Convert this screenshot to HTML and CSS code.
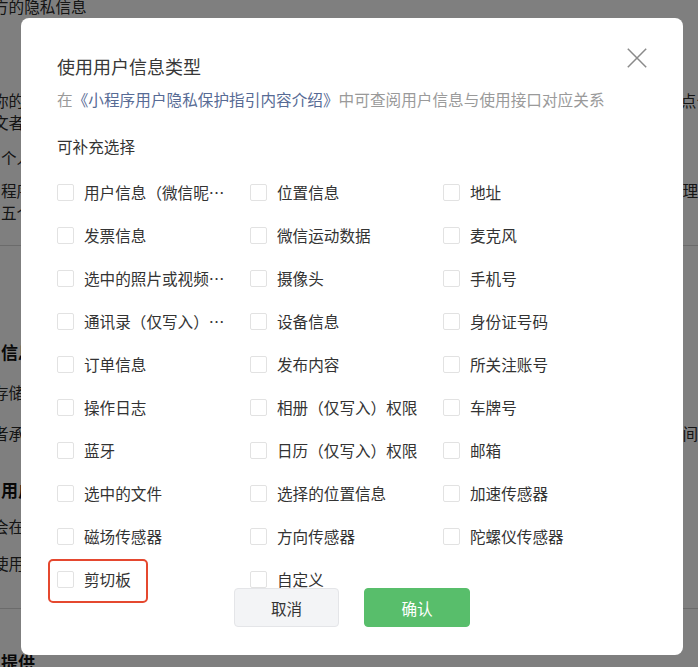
FILE: index.html
```html
<!DOCTYPE html>
<html lang="zh-CN">
<head>
<meta charset="utf-8">
<title>使用用户信息类型</title>
<link rel="stylesheet" href="styles.css">
</head>
<body>
<div class="page">
  <div class="line lead-cut m-first">方的隐私信息</div>
  <div class="line lead-cut m72"><span>你的小程序将在用户同意后收集</span><span class="tail tail-over">点击</span></div>
  <div class="line lead-cut m0">文者声明</div>
  <div class="line lead-full m13">个人信息</div>
  <div class="line lead-full m11"><span>程序开发者</span><span class="tail">理</span></div>
  <div class="line lead-full m0">五个</div>
  <hr class="rule m22">
  <div class="line heading lead-full m95">信息存储</div>
  <div class="line lead-cut m18">存储期限</div>
  <div class="line lead-cut m19"><span>者承诺</span><span class="tail">间</span></div>
  <div class="line heading lead-full m35">用户权益</div>
  <div class="line lead-cut m14">会在</div>
  <div class="line lead-cut m15">使用</div>
  <hr class="rule m34">
  <div class="line heading lead-full m42">提供</div>
</div>

<div class="mask">
  <div class="dialog">
    <div class="dialog-head">
      <h2 class="title">使用用户信息类型</h2>
      <button class="close" type="button" aria-label="关闭">
        <svg width="20" height="20" viewBox="0 0 20 20"><path d="M0.8 0.8 L19.2 19.2 M19.2 0.8 L0.8 19.2" stroke="#8a8a8a" stroke-width="1.5" fill="none"/></svg>
      </button>
    </div>
    <p class="desc">在<a class="link">《小程序用户隐私保护指引内容介绍》</a>中可查阅用户信息与使用接口对应关系</p>
    <p class="section">可补充选择</p>
    <div class="grid">
      <label class="item"><span class="box"></span><span class="text">用户信息（微信昵称、头像）</span></label>
      <label class="item"><span class="box"></span><span class="text">位置信息</span></label>
      <label class="item"><span class="box"></span><span class="text">地址</span></label>
      <label class="item"><span class="box"></span><span class="text">发票信息</span></label>
      <label class="item"><span class="box"></span><span class="text">微信运动数据</span></label>
      <label class="item"><span class="box"></span><span class="text">麦克风</span></label>
      <label class="item"><span class="box"></span><span class="text">选中的照片或视频信息</span></label>
      <label class="item"><span class="box"></span><span class="text">摄像头</span></label>
      <label class="item"><span class="box"></span><span class="text">手机号</span></label>
      <label class="item"><span class="box"></span><span class="text">通讯录（仅写入）权限</span></label>
      <label class="item"><span class="box"></span><span class="text">设备信息</span></label>
      <label class="item"><span class="box"></span><span class="text">身份证号码</span></label>
      <label class="item"><span class="box"></span><span class="text">订单信息</span></label>
      <label class="item"><span class="box"></span><span class="text">发布内容</span></label>
      <label class="item"><span class="box"></span><span class="text">所关注账号</span></label>
      <label class="item"><span class="box"></span><span class="text">操作日志</span></label>
      <label class="item"><span class="box"></span><span class="text">相册（仅写入）权限</span></label>
      <label class="item"><span class="box"></span><span class="text">车牌号</span></label>
      <label class="item"><span class="box"></span><span class="text">蓝牙</span></label>
      <label class="item"><span class="box"></span><span class="text">日历（仅写入）权限</span></label>
      <label class="item"><span class="box"></span><span class="text">邮箱</span></label>
      <label class="item"><span class="box"></span><span class="text">选中的文件</span></label>
      <label class="item"><span class="box"></span><span class="text">选择的位置信息</span></label>
      <label class="item"><span class="box"></span><span class="text">加速传感器</span></label>
      <label class="item"><span class="box"></span><span class="text">磁场传感器</span></label>
      <label class="item"><span class="box"></span><span class="text">方向传感器</span></label>
      <label class="item"><span class="box"></span><span class="text">陀螺仪传感器</span></label>
      <label class="item marked"><span class="box"></span><span class="text">剪切板</span></label>
      <label class="item"><span class="box"></span><span class="text">自定义</span></label>
    </div>
    <div class="footer">
      <button class="btn btn-cancel" type="button">取消</button>
      <button class="btn btn-ok" type="button">确认</button>
    </div>
  </div>
</div>
</body>
</html>
```

FILE: styles.css
```css
* { box-sizing: border-box; }

html, body {
  margin: 0;
  padding: 0;
  background: #ffffff;
  overflow: hidden;
}

body {
  font-family: "Noto Sans CJK SC", "Noto Sans", sans-serif;
  font-size: 15.6px;
  color: #333333;
  width: 698px;
  height: 667px;
}

/* background page */
.page {
  width: 698px;
}

.line {
  display: flex;
  justify-content: space-between;
  line-height: 22px;
  height: 22px;
  white-space: nowrap;
  color: #2a2a2a;
}

.heading {
  font-weight: 700;
  font-size: 17px;
  color: #111111;
}

.lead-cut { margin-left: -7px; }
.lead-full { margin-left: 1px; }

.tail { margin-right: 0; }
.tail-over { margin-right: -14px; }

.rule {
  border: 0;
  border-top: 1px solid #d6d6d6;
  margin-bottom: 0;
  margin-left: 0;
  margin-right: 0;
  height: 0;
}

.m-first { margin-top: -5px; }
.m0 { margin-top: 0; }
.m11 { margin-top: 11px; }
.m13 { margin-top: 13px; }
.m14 { margin-top: 14px; }
.m15 { margin-top: 15px; }
.m18 { margin-top: 18px; }
.m19 { margin-top: 19px; }
.m22 { margin-top: 22px; }
.m34 { margin-top: 34px; }
.m35 { margin-top: 35px; }
.m42 { margin-top: 42px; }
.m72 { margin-top: 72px; }
.m95 { margin-top: 95px; }

/* overlay */
.mask {
  position: fixed;
  inset: 0;
  background: rgba(0, 0, 0, 0.5);
  padding: 18px 0 0 21px;
}

.dialog {
  width: 662px;
  background: #ffffff;
  border-radius: 8px;
  padding: 36px 36px 28px 36px;
}

.dialog-head {
  display: flex;
  justify-content: space-between;
  align-items: flex-start;
}

.title {
  margin: 0;
  font-size: 18px;
  font-weight: 400;
  line-height: 24px;
  color: #383838;
}

.close {
  margin-top: -6px;
  width: 20px;
  height: 20px;
  padding: 0;
  border: 0;
  background: transparent;
  display: block;
}

.close svg { display: block; }

.desc {
  margin: 10px 0 0 0;
  line-height: 22px;
  color: #9a9a9a;
  white-space: nowrap;
  letter-spacing: 0.05px;
}

.link {
  color: #576b95;
  text-decoration: none;
}

.section {
  margin: 25px 0 0 0;
  line-height: 22px;
  color: #333333;
}

.grid {
  margin-top: 24px;
  display: grid;
  grid-template-columns: 193px 193px 1fr;
  row-gap: 21px;
}

.item {
  position: relative;
  display: flex;
  align-items: center;
  gap: 10px;
  height: 22px;
}

.box {
  flex: none;
  width: 17px;
  height: 17px;
  border: 1px solid #e2e2e2;
  border-radius: 2px;
  background: #ffffff;
}

.text {
  line-height: 22px;
  max-width: 145px;
  overflow: hidden;
  white-space: nowrap;
  text-overflow: ellipsis;
  color: #333333;
}

.marked::after {
  content: "";
  position: absolute;
  left: -9px;
  top: -9px;
  width: 96px;
  height: 40px;
  border: 2px solid #e5482f;
  border-radius: 5px;
}

.footer {
  margin-top: -2px;
  display: flex;
  justify-content: center;
  gap: 25px;
  position: relative;
}

.btn {
  height: 39px;
  border-radius: 4px;
  font-family: inherit;
  font-size: 15.6px;
  padding: 0;
}

.btn-cancel {
  width: 105px;
  background: #f3f4f6;
  border: 1px solid #e4e5e8;
  color: #333333;
}

.btn-ok {
  width: 106px;
  background: #58be6b;
  border: 1px solid #58be6b;
  color: #ffffff;
}
```
